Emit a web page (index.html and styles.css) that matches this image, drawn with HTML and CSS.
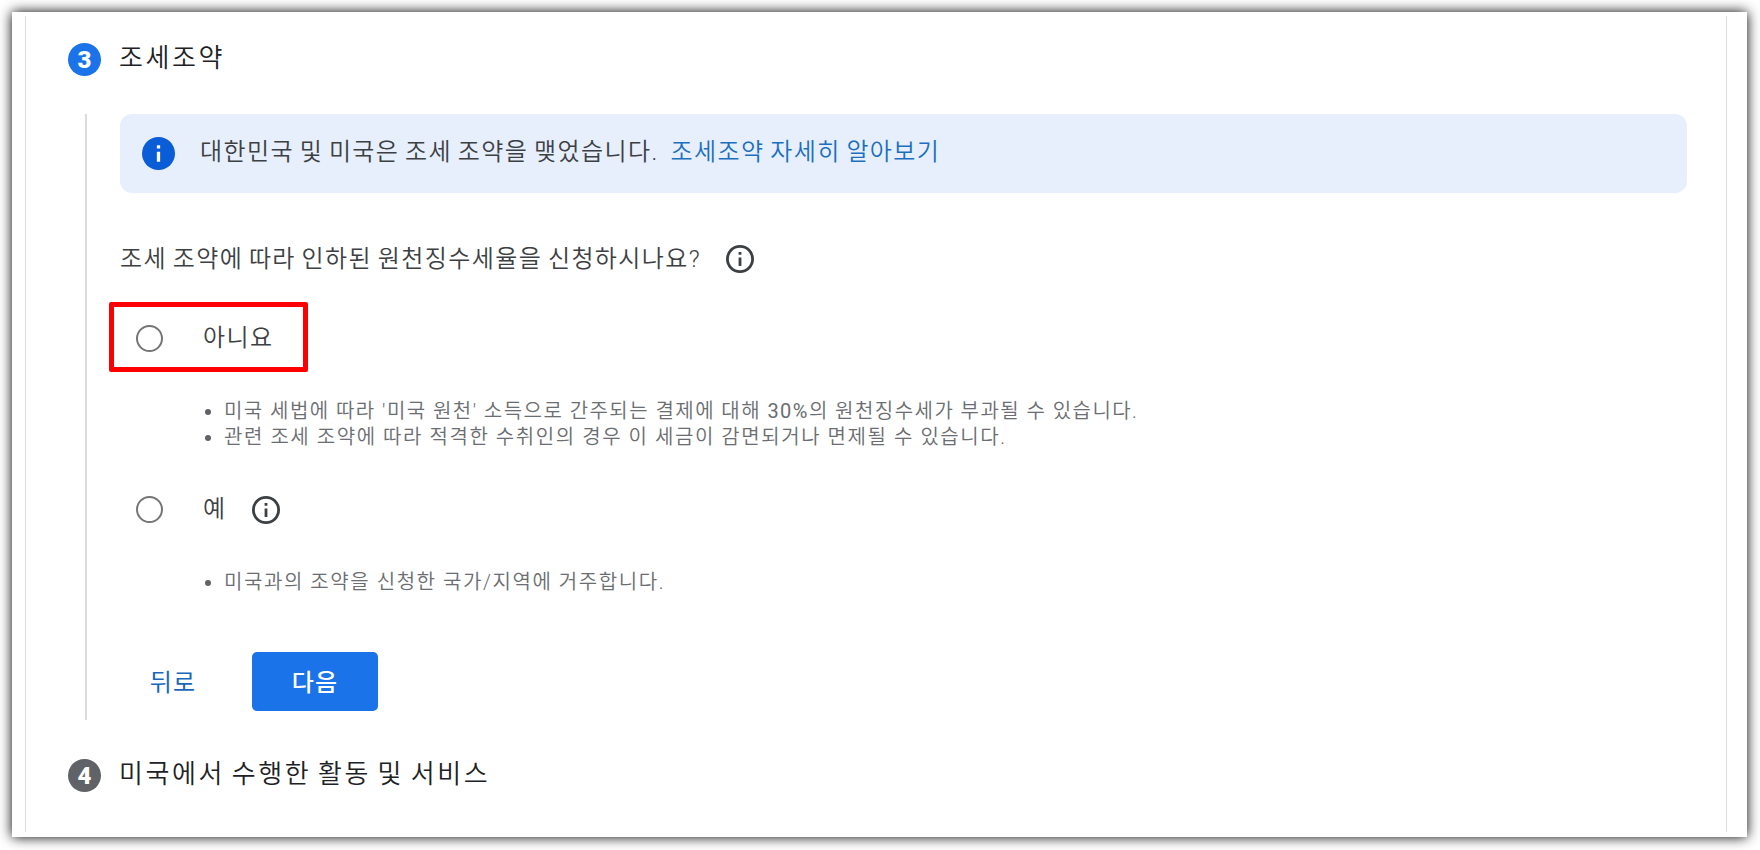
FILE: index.html
```html
<!DOCTYPE html>
<html lang="ko">
<head>
    <meta charset="UTF-8">
    <meta name="viewport" content="width=device-width, initial-scale=1.0">
    <title>조세조약</title>
    <link rel="stylesheet" href="styles.css">
</head>
<body>
    <div class="sheet">
        <main class="card">
            <div class="step">
                <span class="step-number active">3</span>
                <h2>조세조약</h2>
            </div>

            <section class="step-body">
                <div class="banner">
                    <svg class="banner-icon" viewBox="0 0 20 20">
                        <circle cx="10" cy="10" r="10" fill="#0b5cd7"/>
                        <path d="M9 9h2v6H9zM9 5h2v2H9z" fill="#fff"/>
                    </svg>
                    <p>대한민국 및 미국은 조세 조약을 맺었습니다.</p>
                    <a href="#">조세조약 자세히 알아보기</a>
                </div>

                <div class="question">
                    <p>조세 조약에 따라 인하된 원천징수세율을 신청하시나요?</p>
                    <svg class="info" viewBox="0 0 20 20">
                        <circle cx="10" cy="10" r="9" fill="none" stroke="currentColor" stroke-width="2"/>
                        <path d="M9 9h2v6H9zM9 5h2v2H9z" fill="currentColor"/>
                    </svg>
                </div>

                <div class="option highlighted">
                    <span class="radio"></span>
                    <span class="option-label">아니요</span>
                </div>
                <ul class="notes">
                    <li class="note-long">미국 세법에 따라 '미국 원천' 소득으로 간주되는 결제에 대해 <span class="rate">30%</span>의 원천징수세가 부과될 수 있습니다.</li>
                    <li>관련 조세 조약에 따라 적격한 수취인의 경우 이 세금이 감면되거나 면제될 수 있습니다.</li>
                </ul>

                <div class="option">
                    <span class="radio"></span>
                    <span class="option-label">예</span>
                    <svg class="info" viewBox="0 0 20 20">
                        <circle cx="10" cy="10" r="9" fill="none" stroke="currentColor" stroke-width="2"/>
                        <path d="M9 9h2v6H9zM9 5h2v2H9z" fill="currentColor"/>
                    </svg>
                </div>
                <ul class="notes notes-treaty">
                    <li>미국과의 조약을 신청한 국가/지역에 거주합니다.</li>
                </ul>

                <div class="actions">
                    <button class="back">뒤로</button>
                    <button class="next">다음</button>
                </div>
            </section>

            <div class="step">
                <span class="step-number">4</span>
                <h2>미국에서 수행한 활동 및 서비스</h2>
            </div>
        </main>
    </div>
</body>
</html>
```
FILE: styles.css
```css
* {
    box-sizing: border-box;
}

body {
    margin: 0;
    padding: 12px 13px 13px 12px;
    height: 850px;
    overflow: hidden;
    background-color: #fff;
    color: #3c4043;
    font-family: Roboto, 'Noto Sans CJK KR', sans-serif;
    font-weight: 350;
}

h2, p, ul {
    margin: 0;
    padding: 0;
    font-weight: inherit;
}

.sheet {
    height: 825px;
    padding: 4px 20px 5px 13px;
    background-color: #fff;
    box-shadow: 0 0 12px #000;
}

.card {
    height: 816px;
    padding: 27px 39px 0 42px;
    border-left: 1px solid #dadce0;
    border-right: 1px solid #dadce0;
}

.step {
    display: flex;
    align-items: center;
    gap: 18px;
    height: 33px;
}

.step h2 {
    font-size: 26px;
    line-height: 33px;
    letter-spacing: 2.6px;
    word-spacing: -2.3px;
    color: #202124;
    margin-top: -2px;
}

.step-number {
    width: 33px;
    height: 33px;
    border-radius: 50%;
    background-color: #5f6368;
    color: #fff;
    font-size: 24px;
    font-weight: 900;
    line-height: 34px;
    text-align: center;
}

.step-number.active {
    background-color: #1a73e8;
}

.step-body {
    height: 606px;
    margin: 38px 0 39px 17px;
    padding-left: 33px;
    border-left: 2px solid #dadce0;
}

.banner {
    display: flex;
    align-items: center;
    height: 79px;
    padding-left: 22px;
    border-radius: 12px;
    background-color: #e7effc;
    font-size: 24px;
    letter-spacing: 1.4px;
    word-spacing: -1.5px;
}

.banner p,
.banner a {
    line-height: 34px;
    margin-top: -3px;
}

.banner-icon {
    width: 33px;
    height: 33px;
    margin-right: 25px;
}

.banner a {
    margin-left: 12px;
    color: #1a6fbf;
    text-decoration: none;
}

.question {
    display: flex;
    align-items: center;
    height: 34px;
    margin-top: 49px;
    font-size: 24px;
    letter-spacing: 1.4px;
    word-spacing: -1.5px;
}

.question p {
    margin-top: -5px;
}

.info {
    width: 28px;
    height: 28px;
    margin-left: 25px;
}

.option {
    display: flex;
    align-items: center;
    width: 199px;
    height: 71px;
    margin-left: -11px;
    padding-left: 27px;
    font-size: 24px;
    letter-spacing: 1.4px;
}

.option.highlighted {
    height: 70px;
    margin-top: 26px;
    padding: 2px 0 0 22px;
    border: 5px solid #f00;
    border-radius: 2px;
}

.radio {
    width: 27px;
    height: 27px;
    border: 2px solid #757575;
    border-radius: 50%;
}

.option-label {
    margin: -6px 1px 0 40px;
}

.notes {
    margin-top: 26px;
    margin-bottom: 24px;
    padding-left: 104px;
    font-size: 20px;
    line-height: 26px;
    letter-spacing: 1.57px;
    color: #6a6d71;
}

.notes li::marker {
    color: #5f6368;
}

.note-long {
    letter-spacing: 1.46px;
}

.rate {
    font-weight: 400;
}

.notes-treaty {
    margin-top: 24px;
}

.actions {
    display: flex;
    align-items: center;
    margin-top: 57px;
}

.actions button {
    height: 59px;
    padding: 0 0 3px;
    border: none;
    background: none;
    font-family: inherit;
    font-size: 24px;
    font-weight: 400;
    letter-spacing: 1.2px;
}

.actions .back {
    width: 106px;
    color: #1967b8;
}

.actions .next {
    width: 126px;
    margin-left: 26px;
    border-radius: 5px;
    background-color: #1a73e8;
    color: #fff;
    font-weight: 500;
}
```
